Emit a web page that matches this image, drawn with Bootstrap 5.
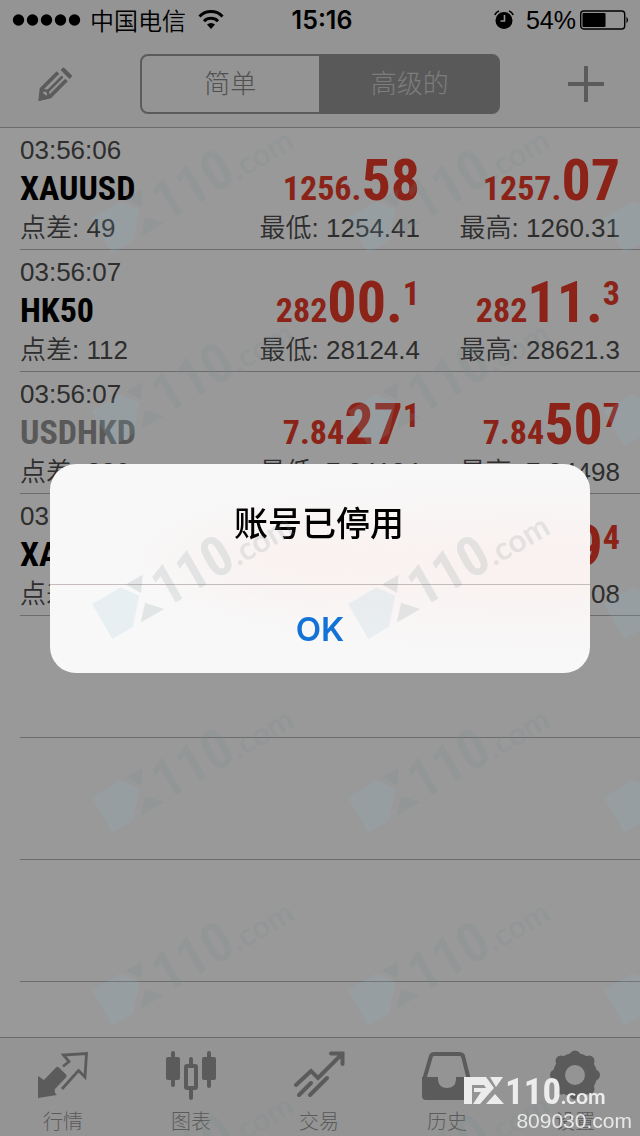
<!DOCTYPE html>
<html lang="zh-CN">
<head>
<meta charset="utf-8">
<meta name="viewport" content="width=device-width, initial-scale=1">
<title>行情</title>
<link rel="stylesheet" href="https://cdn.jsdelivr.net/npm/bootstrap@5.3.0/dist/css/bootstrap.min.css">
<style>
  :root { --chrome: #f7f7f7; --ink: #4d4d4d; --tint: #989898; --rule: #b4b4b4; --price: #e83b2a; }
  body { font-family: "Liberation Sans", "Noto Sans CJK SC", sans-serif; background: #fff; color: #000; }
  .chrome { background: var(--chrome); }
  .status-bar { height: 40px; font-size: 24px; line-height: 40px; padding: 0 10px 0 12px; }
  .status-clock { font-family: Inter, "Liberation Sans", sans-serif; font-weight: 600; font-size: 25px; padding-left: 2px; }
  .status-side { flex: 1 1 0; }
  .carrier { font-family: "Noto Sans CJK SC", sans-serif; font-weight: 350; }
  .battery-text { font-family: "Liberation Sans", sans-serif; font-size: 25px; }
  .tool-bar { height: 88px; border-bottom: 1px solid var(--rule); padding: 0 34px; color: var(--tint); }
  .tool-btn { color: var(--tint); width: 40px; }
  .mode-switch { width: 360px; height: 60px; }
  .mode-switch .btn { --bs-btn-color: #888; --bs-btn-border-color: #989898; --bs-btn-border-width: 2px;
    --bs-btn-active-bg: #959595; --bs-btn-active-color: #d0d0d0; --bs-btn-active-border-color: #959595;
    font-size: 26px; line-height: 56px; padding: 0; border-radius: 8px; font-weight: 300; flex: 1 1 0; }
  .quote { height: 122px; margin-left: 20px; padding: 4px 20px 0 0; border-bottom: 1px solid var(--rule); }
  .quote-time, .quote-info { color: var(--ink); font-size: 26px; line-height: 36px; white-space: nowrap; }
  .quote-info { font-weight: 350; padding-top: 2px; }
  .symbol, .price { font-family: "Roboto Condensed", "Liberation Sans Narrow", "Liberation Sans", sans-serif; font-weight: 700; font-size: 34px; line-height: 40px; white-space: nowrap; }
  .price { color: var(--price); }
  .pips { font-size: 58px; line-height: 40px; }
  .point { position: static; font-size: 34px; line-height: 40px; vertical-align: 17px; }
  .symbol-muted { color: #959595; }
  .tab-bar { border-top: 1px solid var(--rule); height: 99px; }
  .tab-link { color: var(--tint); font-size: 20px; line-height: 28px; font-weight: 300; padding: 12px 2px 0 0; }
  .modal-backdrop { --bs-backdrop-opacity: .4; }
  .alert-box { --bs-modal-width: 540px; --bs-modal-margin: 0px; }
  .alert-box .modal-content { border: 0; border-radius: 26px; overflow: hidden;
    background: radial-gradient(ellipse at 88% 48%, #faf1f0 0, transparent 60%), radial-gradient(ellipse at 45% 45%, #f9f3f2 0, transparent 40%), #f8f8f8; }
  .alert-title { font-size: 34px; line-height: 48px; font-weight: 500; font-family: "Noto Sans CJK SC", sans-serif; padding: 34px 2px 38px 0; }
  .alert-ok { font-family: Inter, "Liberation Sans", sans-serif; font-size: 33px; line-height: 48px; font-weight: 600; padding: 20px 0; color: #1272d6; border: 0; border-top: 1px solid #c4bcbc; border-radius: 0; }
  .overlay-mark { z-index: 1080; pointer-events: none; }
  .logo-digits { font: 700 37px "Roboto Condensed", "Liberation Sans Narrow", sans-serif; }
  .logo-com { font: 700 21px Lato, sans-serif; }
  .site-tag { right: 8px; bottom: 2px; color: #e8e8e8; }
  .site-url { font-size: 21px; line-height: 26px; }
</style>
</head>
<body>
<div class="d-flex flex-column min-vh-100">
  <header class="chrome">
    <div class="status-bar d-flex align-items-center">
      <div class="status-side d-flex align-items-center">
        <svg class="me-2" width="70" height="12" viewBox="0 0 70 12" aria-hidden="true"><circle cx="6.500" cy="6" r="5.700"/><circle cx="20.500" cy="6" r="5.700"/><circle cx="34.500" cy="6" r="5.700"/><circle cx="48.500" cy="6" r="5.700"/><circle cx="62.500" cy="6" r="5.700"/></svg>
        <span class="carrier">中国电信</span>
        <svg class="ms-2 ps-1" width="30" height="20" viewBox="0 0 26 20" fill="none" stroke="#000" stroke-width="3" aria-hidden="true"><path d="M1.500 6.500a16 16 0 0 1 23 0M6 11.200a10 10 0 0 1 14 0"/><path d="M13 19l-4-4.500a6 6 0 0 1 8 0z" fill="#000" stroke="none"/></svg>
      </div>
      <div class="status-clock">15:16</div>
      <div class="status-side d-flex align-items-center justify-content-end">
        <svg class="me-2" width="24" height="20" viewBox="0 0 24 20" aria-hidden="true"><circle cx="10" cy="10.500" r="8.500"/><path d="M.8 5A7 7 0 0 1 5 1M15 1a7 7 0 0 1 4.200 4" fill="none" stroke="#000" stroke-width="1.600"/><path d="M10.500 5v6H6.500" fill="none" stroke="#f7f7f7" stroke-width="1.600"/></svg>
        <span class="battery-text">54%</span>
        <svg class="ms-1" width="50" height="20" viewBox="0 0 50 20" aria-hidden="true"><rect x=".7" y="1" width="44" height="18" rx="3" fill="none" stroke="#000" stroke-width="1.400"/><rect x="2.500" y="3" width="23" height="14" rx="1"/><path d="M46.500 6.500q3 3.500 0 7z"/></svg>
      </div>
    </div>
    <div class="tool-bar d-flex align-items-center justify-content-between">
      <button class="tool-btn btn p-0 border-0" type="button" aria-label="编辑">
        <svg width="36" height="36" viewBox="0 0 36 36" fill="none" stroke="currentColor"><path d="M22 6.500L5.500 23 4.500 32.500 14 30.500 30.500 14" stroke-width="3.800"/><path d="M3 35l1.500-10.500 8.500 8z" fill="currentColor" stroke="none"/><path d="M26.500 10.500L12 25M6 24l5.500 1 1.500 6" stroke-width="2.600"/><path d="M24.500 4l2-2q1-1 2 0l7 7q1 1 0 2l-2 2z" fill="currentColor" stroke="none"/></svg>
      </button>
      <div class="mode-switch btn-group" role="group" aria-label="模式">
        <button class="btn" type="button">简单</button>
        <button class="btn active" type="button" aria-pressed="true">高级的</button>
      </div>
      <button class="tool-btn btn p-0 border-0" type="button" aria-label="添加">
        <svg width="36" height="36" viewBox="0 0 36 36" stroke="currentColor" stroke-width="4"><path d="M18 0v36M0 18h36"/></svg>
      </button>
    </div>
  </header>

  <main class="flex-grow-1">
    <section class="quote">
      <div class="row g-0 align-items-end">
        <div class="col"><div class="quote-time">03:56:06</div><div class="symbol">XAUUSD</div></div>
        <div class="col text-end price">1256.<span class="pips">58</span></div>
        <div class="col text-end price">1257.<span class="pips">07</span></div>
      </div>
      <div class="row g-0 quote-info"><div class="col">点差: 49</div><div class="col text-end">最低: 1254.41</div><div class="col text-end">最高: 1260.31</div></div>
    </section>
    <section class="quote">
      <div class="row g-0 align-items-end">
        <div class="col"><div class="quote-time">03:56:07</div><div class="symbol">HK50</div></div>
        <div class="col text-end price">282<span class="pips">00.</span><sup class="point">1</sup></div>
        <div class="col text-end price">282<span class="pips">11.</span><sup class="point">3</sup></div>
      </div>
      <div class="row g-0 quote-info"><div class="col">点差: 112</div><div class="col text-end">最低: 28124.4</div><div class="col text-end">最高: 28621.3</div></div>
    </section>
    <section class="quote">
      <div class="row g-0 align-items-end">
        <div class="col"><div class="quote-time">03:56:07</div><div class="symbol symbol-muted">USDHKD</div></div>
        <div class="col text-end price">7.84<span class="pips">27</span><sup class="point">1</sup></div>
        <div class="col text-end price">7.84<span class="pips">50</span><sup class="point">7</sup></div>
      </div>
      <div class="row g-0 quote-info"><div class="col">点差: 236</div><div class="col text-end">最低: 7.84184</div><div class="col text-end">最高: 7.84498</div></div>
    </section>
    <section class="quote">
      <div class="row g-0 align-items-end">
        <div class="col"><div class="quote-time">03:56:07</div><div class="symbol">XAGUSD</div></div>
        <div class="col text-end price">17.<span class="pips">05</span><sup class="point">4</sup></div>
        <div class="col text-end price">17.<span class="pips">09</span><sup class="point">4</sup></div>
      </div>
      <div class="row g-0 quote-info"><div class="col">点差: 40</div><div class="col text-end">最低: 16.988</div><div class="col text-end">最高: 17.208</div></div>
    </section>
    <div class="quote"></div>
    <div class="quote"></div>
    <div class="quote"></div>
  </main>

  <nav class="tab-bar chrome row g-0 text-center">
    <a class="col tab-link text-decoration-none" href="#quotes"><svg class="d-block mx-auto mb-2" width="52" height="50" viewBox="0 0 52 50" fill="none"><path d="M1 26l6 4L19 17.500q1.500-1.500 3 0l7 7q1.500 1.500 0 3L18 39q-1 4 2 6L1 48z" fill="currentColor"/><path d="M26 16.500l6-5-5.500-6.500L49.500 3.500 48 27 41.500 20.500 25 39" stroke="currentColor" stroke-width="2.800"/></svg>行情</a>
    <a class="col tab-link text-decoration-none" href="#chart"><svg class="d-block mx-auto mb-2" width="52" height="50" viewBox="0 0 52 50" fill="currentColor"><rect x="1" y="7" width="14" height="23" rx="2"/><rect x="6" y="1" width="4" height="36" rx="2"/><rect x="37" y="7" width="14" height="23" rx="2"/><rect x="42" y="1" width="4" height="37" rx="2"/><rect x="24" y="7" width="4" height="9" rx="2"/><rect x="24" y="38" width="4" height="12" rx="2"/><rect x="21" y="16" width="10" height="22" rx="1" fill="none" stroke="currentColor" stroke-width="4"/></svg>图表</a>
    <a class="col tab-link text-decoration-none" href="#trade"><svg class="d-block mx-auto mb-2" width="52" height="50" viewBox="0 0 52 50" fill="none" stroke="currentColor" stroke-width="4" stroke-linecap="round"><path d="M3 35l15-14 7 7L49 4M38 3.500h11.500V14M6 45l12-12M17 45L34 28" stroke-linejoin="miter"/></svg>交易</a>
    <a class="col tab-link text-decoration-none" href="#history"><svg class="d-block mx-auto mb-2" width="52" height="50" viewBox="0 0 52 50" fill="none"><path d="M3 30L10 6q1-2 3-2h25q3 0 4 2l6 24" stroke="currentColor" stroke-width="4"/><path d="M1 27h16v3q1 8 9 8t9-8v-3h15v19q0 4-4 4H5q-4 0-4-4z" fill="currentColor"/></svg>历史</a>
    <a class="col tab-link text-decoration-none" href="#settings"><svg class="d-block mx-auto mb-2" width="52" height="50" viewBox="0 0 52 50" fill="currentColor"><circle cx="26" cy="25" r="16" fill="none" stroke="currentColor" stroke-width="12"/><circle cx="26" cy="6" r="5.500"/><circle cx="26" cy="44" r="5.500"/><circle cx="6.500" cy="25" r="5.500"/><circle cx="45.500" cy="25" r="5.500"/><circle cx="12" cy="11" r="5.500"/><circle cx="40" cy="11" r="5.500"/><circle cx="12" cy="39" r="5.500"/><circle cx="40" cy="39" r="5.500"/></svg>设置</a>
  </nav>
</div>

<div class="modal-backdrop show"></div>
<div class="modal d-block" tabindex="-1" role="alertdialog" aria-modal="true" aria-labelledby="alertTitle">
  <div class="modal-dialog modal-dialog-centered alert-box mx-auto">
    <div class="modal-content text-center">
      <h1 class="alert-title m-0" id="alertTitle">账号已停用</h1>
      <button class="alert-ok btn w-100" type="button">OK</button>
    </div>
  </div>
</div>

<svg class="overlay-mark position-fixed top-0 start-0 w-100 h-100" aria-hidden="true">
  <defs>
    <path id="flag" d="M0 0h22l8 11-14 16H9l8-12h-7v-4h12l-2-3H8v19H0z"/>
    <path id="flagTint" d="M0 0h22l8 11-14 16H0z"/>
    <path id="wings" d="M26 0h13L32 10zM31 17l9 10H22z"/>
    <pattern id="tile" x="90" y="120" width="256" height="193" patternUnits="userSpaceOnUse">
      <g transform="translate(2 98) rotate(-30) scale(1.500)">
        <g fill="#8fbccf" opacity=".15"><use href="#flagTint"/></g>
        <g fill="#75868c" opacity=".17"><use href="#wings"/><text class="logo-digits" x="41" y="27">110</text><text class="logo-com" x="97" y="27">.com</text></g>
      </g>
    </pattern>
  </defs>
  <rect x="90" y="120" width="100%" height="100%" fill="url(#tile)"/>
</svg>
<div class="overlay-mark site-tag position-fixed text-end">
  <svg class="d-block" width="168" height="34" viewBox="0 0 168 34" fill="#ececec" role="img" aria-label="FX110.com"><use href="#flag" y="3"/><use href="#wings" y="3"/><text class="logo-digits" x="41" y="30">110</text><text class="logo-com" x="97" y="30">.com</text></svg>
  <div class="site-url">809030.com</div>
</div>
<script src="https://cdn.jsdelivr.net/npm/bootstrap@5.3.0/dist/js/bootstrap.bundle.min.js"></script>
</body>
</html>
